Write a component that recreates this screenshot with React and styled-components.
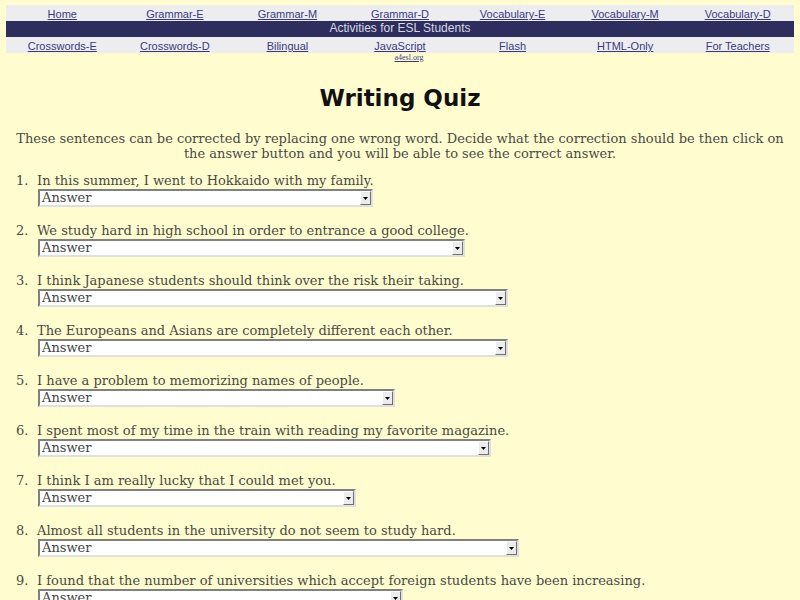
import React from "react";
import styled, { createGlobalStyle } from "styled-components";

const Global = createGlobalStyle`
  html, body {
    margin: 0;
    padding: 0;
    background: #fffdd0;
  }
  body {
    padding: 5px 6px 0 6px;
    font-family: "DejaVu Serif", "Liberation Serif", serif;
    color: #4a4a44;
  }
`;

const topLinks = ["Home", "Grammar-E", "Grammar-M", "Grammar-D", "Vocabulary-E", "Vocabulary-M", "Vocabulary-D"];
const bottomLinks = ["Crosswords-E", "Crosswords-D", "Bilingual", "JavaScript", "Flash", "HTML-Only", "For Teachers"];

const questions = [
  { text: "In this summer, I went to Hokkaido with my family.", width: 335 },
  { text: "We study hard in high school in order to entrance a good college.", width: 427 },
  { text: "I think Japanese students should think over the risk their taking.", width: 470 },
  { text: "The Europeans and Asians are completely different each other.", width: 470 },
  { text: "I have a problem to memorizing names of people.", width: 357 },
  { text: "I spent most of my time in the train with reading my favorite magazine.", width: 453 },
  { text: "I think I am really lucky that I could met you.", width: 318 },
  { text: "Almost all students in the university do not seem to study hard.", width: 481 },
  { text: "I found that the number of universities which accept foreign students have been increasing.", width: 365 },
];

export default function App() {
  return (
    <>
      <Global />
      <NavRow>
        {topLinks.map((l) => (
          <NavCell key={l}><NavLink href="#">{l}</NavLink></NavCell>
        ))}
      </NavRow>
      <Banner>Activities for ESL Students</Banner>
      <NavRow>
        {bottomLinks.map((l) => (
          <NavCell key={l}><NavLink href="#">{l}</NavLink></NavCell>
        ))}
      </NavRow>
      <SiteLink href="#">a4esl.org</SiteLink>

      <Title>Writing Quiz</Title>
      <Intro>
        These sentences can be corrected by replacing one wrong word. Decide what the correction should be then click on
        the answer button and you will be able to see the correct answer.
      </Intro>

      <Questions>
        {questions.map((q, i) => (
          <Question key={i}>
            <Num>{i + 1}.</Num>
            <Body>
              <Sentence>{q.text}</Sentence>
              <SelectBox $w={q.width}>
                <NativeSelect defaultValue="a">
                  <option value="a">Answer</option>
                </NativeSelect>
                <ArrowBox>
                  <svg width="5" height="3" viewBox="0 0 5 3">
                    <path d="M0 0 H5 L2.5 3 Z" fill="#000" />
                  </svg>
                </ArrowBox>
              </SelectBox>
            </Body>
          </Question>
        ))}
      </Questions>
    </>
  );
}

const NavRow = styled.div`
  display: grid;
  grid-template-columns: repeat(7, 1fr);
  background: #ededf0;
  height: 16px;
  align-items: center;
`;

const NavCell = styled.div`
  text-align: center;
  line-height: 15px;
`;

const NavLink = styled.a`
  font-family: "Liberation Sans", Arial, sans-serif;
  font-size: 11px;
  color: #3a3a80;
  text-decoration: underline;
`;

const Banner = styled.div`
  background: #2d2d5e;
  color: #d8d8e4;
  height: 16px;
  line-height: 15px;
  text-align: center;
  font-family: "Liberation Sans", Arial, sans-serif;
  font-size: 12px;
`;

const SiteLink = styled.a`
  display: block;
  text-align: center;
  font-family: "Liberation Serif", serif;
  font-size: 8px;
  color: #3a3a80;
  text-decoration: underline;
  margin-left: 18px;
  line-height: 10px;
`;

const Title = styled.h1`
  margin: 20px 0 0;
  text-align: center;
  font-family: "DejaVu Sans", sans-serif;
  font-size: 23px;
  font-weight: bold;
  color: #111;
  line-height: 30px;
`;

const Intro = styled.p`
  margin: 18px 0 0;
  text-align: center;
  font-size: 13px;
  line-height: 15px;
`;

const Questions = styled.ol`
  list-style: none;
  margin: 12px 0 0;
  padding-left: 10px;
  font-size: 13px;
`;

const Question = styled.li`
  display: flex;
  line-height: 15px;
  margin-bottom: 16px;
`;

const Num = styled.span`
  width: 21px;
  flex: none;
`;

const Body = styled.div`
  display: flex;
  flex-direction: column;
  align-items: flex-start;
`;

const Sentence = styled.div`
  margin-bottom: 1px;
`;

const SelectBox = styled.div`
  display: flex;
  width: ${(p) => p.$w}px;
  height: 18px;
  box-sizing: border-box;
  background: #fff;
  border: 2px solid;
  border-color: #808080 #e0e0e0 #e0e0e0 #808080;
  margin-left: 1px;
`;

const NativeSelect = styled.select`
  appearance: none;
  flex: 1;
  border: none;
  background: transparent;
  font-family: "DejaVu Serif", serif;
  font-size: 13px;
  color: #444;
  padding: 0 2px;
  outline: none;
  height: 14px;
  line-height: 14px;
`;

const ArrowBox = styled.div`
  width: 11px;
  height: 14px;
  box-sizing: border-box;
  background: #ececec;
  border: 1px solid;
  border-color: #fff #707070 #707070 #fff;
  display: flex;
  align-items: center;
  justify-content: center;
`;
